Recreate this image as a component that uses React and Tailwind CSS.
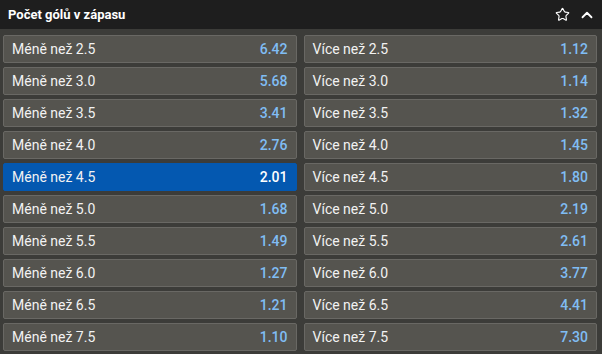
import { Star, ChevronUp } from 'lucide-react';

const ROWS = [
  ['2.5', '6.42', '1.12'],
  ['3.0', '5.68', '1.14'],
  ['3.5', '3.41', '1.32'],
  ['4.0', '2.76', '1.45'],
  ['4.5', '2.01', '1.80'],
  ['5.0', '1.68', '2.19'],
  ['5.5', '1.49', '2.61'],
  ['6.0', '1.27', '3.77'],
  ['6.5', '1.21', '4.41'],
  ['7.5', '1.10', '7.30'],
];

function Cell({ label, odd, active }) {
  return (
    <div
      className={`h-[28px] flex items-center justify-between px-[8px] rounded-[2px] border ${
        active ? 'bg-[#0458b0] border-[#0458b0]' : 'bg-[#55544f] border-[#696864]'
      }`}
    >
      <span className="text-[14px] text-[#f2f2f2]">{label}</span>
      <span className={`text-[14px] font-medium ${active ? 'text-white' : 'text-[#80bdf4]'}`}>{odd}</span>
    </div>
  );
}

export default function App() {
  return (
    <div className="w-[602px] h-[354px] bg-[#3c3c39] overflow-hidden" style={{ fontFamily: 'Roboto, sans-serif' }}>
      <div className="h-[29px] bg-[#1e1e1e] flex items-center justify-between pl-[8px] pr-[6px]">
        <span className="text-[13px] font-bold text-white">Počet gólů v zápasu</span>
        <div className="flex items-center gap-[8px] text-white">
          <Star size={15} strokeWidth={1.8} />
          <ChevronUp size={18} strokeWidth={2.4} />
        </div>
      </div>
      <div className="grid grid-cols-2 gap-x-[7px] gap-y-[4px] pl-[3px] pr-[5px] pt-[6px]">
        {ROWS.map(([line, under, over]) => [
          <Cell key={'u' + line} label={`Méně než ${line}`} odd={under} active={line === '4.5'} />,
          <Cell key={'o' + line} label={`Více než ${line}`} odd={over} />,
        ])}
      </div>
    </div>
  );
}
